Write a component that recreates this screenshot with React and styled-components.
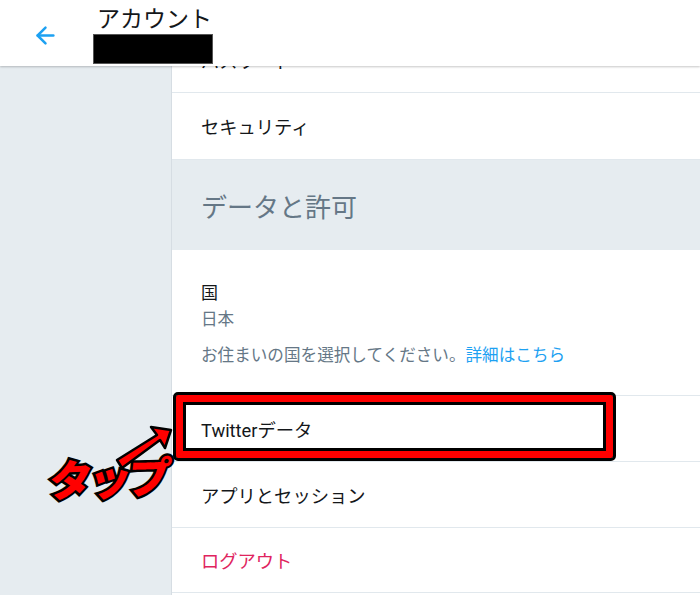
import React from 'react';
import styled, { createGlobalStyle } from 'styled-components';
import { ArrowLeft } from 'lucide-react';

const GlobalStyle = createGlobalStyle`
  html, body {
    margin: 0;
    padding: 0;
    background: #e6ecf0;
  }
  body {
    font-family: Roboto, "Noto Sans CJK JP", "Noto Sans", sans-serif;
    -webkit-font-smoothing: antialiased;
  }
`;

const Screen = styled.div`
  position: relative;
  width: 700px;
  height: 595px;
  overflow: hidden;
  display: grid;
  grid-template-columns: 171px 1fr;
  background: #e6ecf0;
`;

const Header = styled.header`
  position: absolute;
  top: 0;
  left: 0;
  right: 0;
  height: 66px;
  background: #fff;
  box-shadow: 0 1px 2px rgba(0, 0, 0, 0.22);
  z-index: 5;
  display: flex;
  align-items: flex-start;
`;

const BackButton = styled.div`
  width: 93px;
  height: 70px;
  display: flex;
  align-items: center;
  padding-left: 32px;
  box-sizing: border-box;
  color: #1da1f2;
`;

const TitleBlock = styled.div`
  display: flex;
  flex-direction: column;
  padding-top: 5px;
`;

const Title = styled.h1`
  margin: 0 0 0 4px;
  font-size: 23px;
  font-weight: 400;
  line-height: 29px;
  color: #14171a;
`;

const Redacted = styled.div`
  width: 120px;
  height: 30px;
  background: #000;
  border: 1px solid #555;
  box-sizing: border-box;
`;

const Side = styled.aside`
  background: #e6ecf0;
`;

const Column = styled.main`
  background: #fff;
  border-left: 1px solid #d6dde3;
  padding-top: 27px;
  display: flex;
  flex-direction: column;
`;

const Row = styled.div`
  position: relative;
  height: ${p => p.$h || 66}px;
  flex-shrink: 0;
  box-sizing: border-box;
  border-bottom: 1px solid #e1e8ed;
  padding: 0 29px;
  display: flex;
  flex-direction: column;
  justify-content: ${p => (p.$top ? 'flex-start' : 'center')};
  padding-top: ${p => (p.$top ? '31px' : '0')};
  font-size: 18.3px;
  color: ${p => (p.$danger ? '#e0245e' : '#14171a')};
`;

const SectionHead = styled.div`
  height: 90px;
  flex-shrink: 0;
  background: #e6ecf0;
  display: flex;
  align-items: center;
  padding: 0 29px;
  font-size: 26px;
  color: #657786;
`;

const Label = styled.div`
  font-size: 17px;
  line-height: 24px;
  color: #14171a;
`;

const Sub = styled.div`
  font-size: 16.6px;
  line-height: 24px;
  color: #657786;
  margin-top: ${p => p.$gap || 0}px;
`;

const Link = styled.span`
  color: #1da1f2;
`;

const Highlight = styled.div`
  position: absolute;
  left: 1px;
  top: -4px;
  width: 443px;
  height: 69px;
  box-sizing: border-box;
  border: 3px solid #000;
  border-radius: 5px;
  box-shadow: inset 0 0 0 7px #ff0000, inset 0 0 0 10px #000;
  pointer-events: none;
`;

const Annotation = styled.div`
  position: absolute;
  left: 44px;
  top: 418px;
  width: 140px;
  height: 90px;
  z-index: 4;
`;

const TapText = styled.span`
  position: absolute;
  left: 6px;
  top: 33px;
  font-family: "Noto Sans CJK JP", sans-serif;
  font-weight: 900;
  font-size: 43px;
  line-height: 50px;
  letter-spacing: -4px;
  color: #ff0000;
  -webkit-text-stroke: 5px #000;
  paint-order: stroke fill;
  transform: skewX(-8deg) rotate(-2deg);
  white-space: nowrap;
`;

const ArrowSvg = styled.svg`
  position: absolute;
  left: 0;
  top: 0;
  overflow: visible;
`;

export default function App() {
  return (
    <>
      <GlobalStyle />
      <Screen>
        <Header>
          <BackButton>
            <ArrowLeft size={27} strokeWidth={2.2} />
          </BackButton>
          <TitleBlock>
            <Title>アカウント</Title>
            <Redacted />
          </TitleBlock>
        </Header>
        <Side />
        <Column>
          <Row>パスワード</Row>
          <Row $h={67}>セキュリティ</Row>
          <SectionHead>データと許可</SectionHead>
          <Row $h={146} $top>
            <Label>国</Label>
            <Sub $gap={3}>日本</Sub>
            <Sub $gap={12}>
              お住まいの国を選択してください。<Link>詳細はこちら</Link>
            </Sub>
          </Row>
          <Row>
            Twitterデータ
            <Highlight />
          </Row>
          <Row>アプリとセッション</Row>
          <Row $danger $h={65}>ログアウト</Row>
        </Column>
        <Annotation>
          <ArrowSvg width="140" height="90" viewBox="0 0 140 90">
            <polygon
              points="73,42 113,17 107,9 127,12 121,30 116,22 78,50"
              fill="#ff0000"
              stroke="#000"
              strokeWidth="2.5"
              strokeLinejoin="round"
            />
          </ArrowSvg>
          <TapText>タップ</TapText>
        </Annotation>
      </Screen>
    </>
  );
}
